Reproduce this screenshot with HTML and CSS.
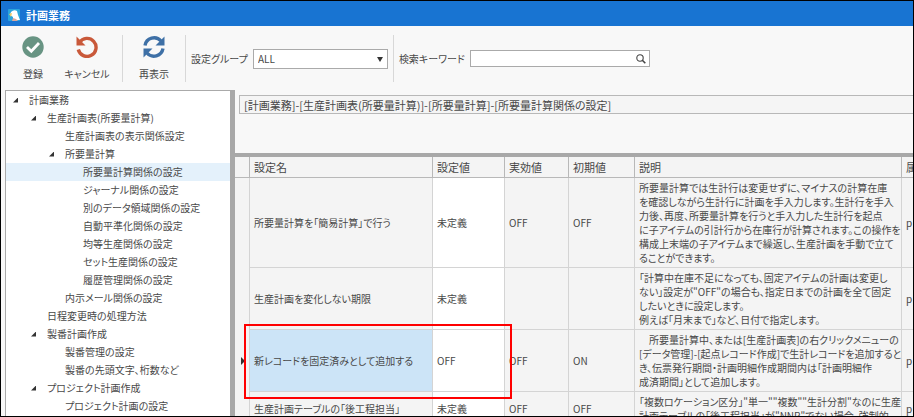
FILE: index.html
```html
<!DOCTYPE html>
<html lang="ja">
<head>
  <meta charset="UTF-8">
  <meta name="viewport" content="width=device-width, initial-scale=1.0">
  <title>計画業務</title>
  <link rel="stylesheet" href="styles.css">
</head>
<body>
  <div class="window">
    <header class="titlebar">
      <svg class="app-icon" viewBox="0 0 12 12" aria-hidden="true">
        <rect width="12" height="12" rx="1" fill="#2aa5dc"/>
        <path d="M3 3 Q6 0 9 2 L10 6 L12 11 H5 L5 8 L2 6 Z" fill="#fff"/>
        <path d="M1 5 L4 4 L3 8 Z" fill="#f0c860"/>
        <path d="M5 9 L8 10 L10 12 H4 Z" fill="#d8a8a0"/>
      </svg>
      <h1>計画業務</h1>
    </header>

    <!-- Toolbar -->
    <div class="toolbar">
      <button class="tool" type="button">
        <svg viewBox="0 0 22 22" aria-hidden="true">
          <circle cx="11" cy="11" r="10.7" fill="#689483"/>
          <path d="M5 11 L9.300 15.300 L17 7" fill="none" stroke="#fff" stroke-width="2.800"/>
        </svg>
        <span>登録</span>
      </button>
      <button class="tool tool-cancel" type="button">
        <svg viewBox="0 0 22 22" aria-hidden="true">
          <path d="M3.500 6.500 A9 9 0 1 1 2.300 13.500" fill="none" stroke="#c9593a" stroke-width="3.400"/>
          <path d="M0.500 0.500 V9.500 H9.500 Z" fill="#c9593a"/>
        </svg>
        <span>キャンセル</span>
      </button>
      <div class="separator"></div>
      <button class="tool tool-refresh" type="button">
        <svg viewBox="0 0 22 22" aria-hidden="true">
          <path d="M2 9.500 A9.200 9.200 0 0 1 18 5" fill="none" stroke="#3e70a6" stroke-width="3.400"/>
          <path d="M21.500 0.500 V9.500 H12.500 Z" fill="#3e70a6"/>
          <path d="M20 12.500 A9.200 9.200 0 0 1 4 17" fill="none" stroke="#3e70a6" stroke-width="3.400"/>
          <path d="M0.500 21.500 V12.500 H9.500 Z" fill="#3e70a6"/>
        </svg>
        <span>再表示</span>
      </button>
      <div class="separator"></div>
      <div class="field">
        <label for="group">設定グループ</label>
        <span class="select-box">
          <select id="group">
            <option>ALL</option>
          </select>
        </span>
      </div>
      <div class="separator"></div>
      <div class="field">
        <label for="keyword">検索キーワード</label>
        <span class="search-box">
          <input id="keyword" type="text">
          <svg viewBox="0 0 10 10" aria-hidden="true">
            <circle cx="4" cy="4" r="3.200" fill="none" stroke="#444" stroke-width="1.100"/>
            <path d="M6.300 6.300 L9.300 9.300" stroke="#444" stroke-width="1.600"/>
          </svg>
        </span>
      </div>
    </div>

    <div class="content">
      <!-- Tree -->
      <nav class="tree">
        <ul>
          <li class="level-0 open"><a href="#">計画業務</a></li>
          <li class="level-1 open"><a href="#">生産計画表(所要量計算)</a></li>
          <li class="level-2"><a href="#">生産計画表の表示関係設定</a></li>
          <li class="level-2 open"><a href="#">所要量計算</a></li>
          <li class="level-3 selected"><a href="#">所要量計算関係の設定</a></li>
          <li class="level-3"><a href="#">ジャーナル関係の設定</a></li>
          <li class="level-3"><a href="#">別のデータ領域関係の設定</a></li>
          <li class="level-3"><a href="#">自動平準化関係の設定</a></li>
          <li class="level-3"><a href="#">均等生産関係の設定</a></li>
          <li class="level-3"><a href="#">セット生産関係の設定</a></li>
          <li class="level-3"><a href="#">履歴管理関係の設定</a></li>
          <li class="level-2"><a href="#">内示メール関係の設定</a></li>
          <li class="level-1"><a href="#">日程変更時の処理方法</a></li>
          <li class="level-1 open"><a href="#">製番計画作成</a></li>
          <li class="level-2"><a href="#">製番管理の設定</a></li>
          <li class="level-2"><a href="#">製番の先頭文字、桁数など</a></li>
          <li class="level-1 open"><a href="#">プロジェクト計画作成</a></li>
          <li class="level-2"><a href="#">プロジェクト計画の設定</a></li>
        </ul>
      </nav>

      <main class="main">
        <div class="path-area">
          <input class="path" type="text" aria-label="パス" readonly value="[計画業務]-[生産計画表(所要量計算)]-[所要量計算]-[所要量計算関係の設定]">
        </div>
        <div class="grid">
          <table>
            <colgroup>
              <col class="col-mark">
              <col class="col-name">
              <col class="col-value">
              <col class="col-effective">
              <col class="col-default">
              <col class="col-text">
              <col class="col-attr">
            </colgroup>
            <thead>
              <tr>
                <th></th>
                <th>設定名</th>
                <th>設定値</th>
                <th>実効値</th>
                <th>初期値</th>
                <th>説明</th>
                <th>属性</th>
              </tr>
            </thead>
            <tbody>
              <tr>
                <td class="mark"></td>
                <td>所要量計算を「簡易計算」で行う</td>
                <td class="value">未定義</td>
                <td>OFF</td>
                <td>OFF</td>
                <td>所要量計算では生計行は変更せずに、マイナスの計算在庫<br>を確認しながら生計行に計画を手入力します。生計行を手入<br>力後、再度、所要量計算を行うと手入力した生計行を起点<br>に子アイテムの引計行から在庫行が計算されます。この操作を<br>構成上末端の子アイテムまで繰返し、生産計画を手動で立て<br>ることができます。</td>
                <td>p</td>
              </tr>
              <tr>
                <td class="mark"></td>
                <td>生産計画を変化しない期限</td>
                <td class="value">未定義</td>
                <td></td>
                <td></td>
                <td>「計算中在庫不足になっても、固定アイテムの計画は変更し<br>ない」設定が"OFF"の場合も、指定日までの計画を全て固定<br>したいときに設定します。<br>例えば「月末まで」など、日付で指定します。</td>
                <td>p</td>
              </tr>
              <tr class="current">
                <td class="mark"></td>
                <td class="name">新レコードを固定済みとして追加する<span class="highlight"></span></td>
                <td class="value">OFF</td>
                <td>OFF</td>
                <td>ON</td>
                <td>　所要量計算中、または[生産計画表]の右クリックメニューの<br>[データ管理]-[起点レコード作成]で生計レコードを追加すると<br>き、伝票発行期間・計画明細作成期間内は「計画明細作<br>成済期間」として追加します。</td>
                <td>p</td>
              </tr>
              <tr class="last">
                <td class="mark"></td>
                <td>生産計画テーブルの「後工程担当」</td>
                <td class="value">未定義</td>
                <td>OFF</td>
                <td>OFF</td>
                <td>「複数ロケーション区分」"単一""複数""生計分割"なのに生産<br>計画テーブルの「後工程担当」が"NNR"でない場合、強制的</td>
                <td>p</td>
              </tr>
            </tbody>
          </table>
        </div>
      </main>
    </div>
  </div>
</body>
</html>
```

FILE: styles.css
```css
* {
  box-sizing: border-box;
}
body {
  margin: 0;
  font-family: 'Noto Sans CJK JP', sans-serif;
  font-size: 10px;
  line-height: 14px;
  font-feature-settings: "palt";
  color: #484848;
}
button, input, select {
  font: inherit;
  font-feature-settings: inherit;
  color: inherit;
}
.window {
  display: flex;
  flex-direction: column;
  height: 100vh;
  overflow: hidden;
  border: 1px solid #000;
  background: #f8f8f8;
}
.titlebar {
  display: flex;
  flex: none;
  align-items: center;
  gap: 6px;
  height: 25px;
  padding: 2px 7px 0;
  background: #1874d2;
  color: #fff;
}
.titlebar h1 {
  margin: 0;
  font-size: 11px;
  font-weight: 700;
}
.app-icon {
  width: 12px;
  height: 12px;
}

/* Toolbar */
.toolbar {
  display: flex;
  flex: none;
  height: 64px;
  padding: 9px 0 8px 5px;
}
.tool {
  display: flex;
  flex-direction: column;
  align-items: center;
  gap: 9px;
  width: 54px;
  padding: 1px 0 0;
  border: none;
  background: none;
  white-space: nowrap;
}
.tool svg {
  width: 22px;
  height: 22px;
}
.tool-cancel {
  margin-right: 8px;
}
.tool-refresh {
  width: 62px;
}
.separator {
  width: 1px;
  background: #d8d8d8;
}
.field {
  display: flex;
  align-items: center;
  gap: 5px;
  padding: 0 5px;
  white-space: nowrap;
}
.select-box {
  position: relative;
}
.select-box::after {
  content: "";
  position: absolute;
  right: 5px;
  top: 8px;
  border: 3px solid transparent;
  border-top: 5px solid #333;
  border-bottom: none;
}
select {
  display: block;
  appearance: none;
  width: 135px;
  height: 20px;
  padding: 0 4px;
  border: 1px solid #aaa;
  border-radius: 0;
  background: #fff;
}
.search-box {
  display: flex;
  align-items: center;
  width: 180px;
  height: 17px;
  padding-right: 3px;
  border: 1px solid #aaa;
  background: #fff;
}
.search-box input {
  flex: 1;
  min-width: 0;
  border: none;
  padding: 0 4px;
  background: none;
}
.search-box svg {
  width: 10px;
  height: 10px;
}

/* Tree */
.content {
  display: flex;
  flex: 1;
  min-height: 0;
}
.tree {
  flex: none;
  width: 225px;
  margin-left: 4px;
  overflow: hidden;
  border: 1px solid #aaa;
  border-bottom: none;
  border-right: none;
  background: #fff;
}
.tree ul {
  margin: 0;
  padding: 0;
  list-style: none;
}
.tree li {
  display: flex;
  align-items: center;
  height: 18px;
  white-space: nowrap;
}
.tree li::before {
  content: "";
  width: 5px;
  height: 5px;
  margin-right: 11px;
}
.tree li.open::before {
  background: #333;
  clip-path: polygon(100% 0, 100% 100%, 0 100%);
}
.tree a {
  color: inherit;
  text-decoration: none;
}
.level-0 {
  padding-left: 7px;
}
.level-1 {
  padding-left: 25px;
}
.level-2 {
  padding-left: 43px;
}
.level-3 {
  padding-left: 61px;
}
.tree .selected {
  background: #e4f1fb;
}

/* Settings */
.main {
  display: flex;
  flex: 1;
  flex-direction: column;
  min-width: 0;
  border-left: 5px solid #a8a8a8;
}
.path-area {
  flex: none;
  height: 63px;
  padding: 5px 0 0 4px;
}
.path {
  display: block;
  width: 100%;
  height: 19px;
  padding: 0 4px;
  border: 1px solid #b8b8b8;
  border-right: none;
  background: #f5f5f5;
  font-size: 11px;
}
.grid {
  flex: 1;
  min-height: 0;
  overflow: hidden;
  border-top: 4px solid #a8a8a8;
  background: #f4f4f4;
}
table {
  width: 100%;
  table-layout: fixed;
  border-collapse: separate;
  border-spacing: 0;
}
.col-mark {
  width: 15px;
}
.col-name {
  width: 183px;
}
.col-value {
  width: 72px;
}
.col-effective {
  width: 64px;
}
.col-default {
  width: 66px;
}
.col-attr {
  width: 11px;
}
th, td {
  padding: 0 4px;
  border-right: 1px solid #d4d4d4;
  border-bottom: 1px solid #d4d4d4;
  text-align: left;
  font-weight: normal;
  white-space: nowrap;
}
th {
  height: 21px;
  border-color: #b8b8b8;
  font-size: 11px;
}
td {
  height: 62px;
  padding: 3px 4px 2px;
}
th:last-child, td:last-child {
  overflow: hidden;
  padding-right: 0;
  border-right: none;
}
.mark {
  padding: 0;
  border-bottom: none;
}
.value {
  background: #fff;
}
.last td {
  height: 34px;
}
.current .name {
  position: relative;
  background: #cce4f7;
}
.current .mark::before {
  content: "";
  display: block;
  width: 0;
  margin-left: 6px;
  border: 4px solid transparent;
  border-left: 4px solid #333;
  border-right: none;
}
.highlight {
  position: absolute;
  left: -6px;
  top: -6px;
  width: 268px;
  height: 75px;
  border: 2px solid #f00;
}
```
